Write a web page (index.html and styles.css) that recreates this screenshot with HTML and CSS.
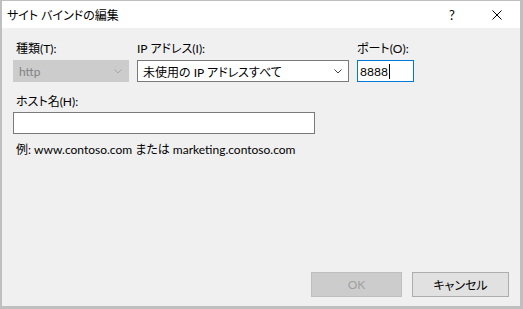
FILE: index.html
```html
<!DOCTYPE html>
<html lang="ja">

<head>
    <meta charset="UTF-8">
    <title>サイト バインドの編集</title>
    <link rel="stylesheet" href="styles.css">
</head>

<body>
    <div class="dialog">
        <div class="titlebar">
            <span class="title">サイト バインドの編集</span>
            <span class="help">?</span>
            <span class="close">
                <svg width="10" height="10" viewBox="0 0 10 10">
                    <path d="M0.5 0.5 L9.5 9.5 M9.5 0.5 L0.5 9.5" stroke="#000" stroke-width="1" fill="none" />
                </svg>
            </span>
        </div>
        <div class="content">
            <div class="row">
                <div class="group g-type">
                    <div class="label indent">種類(T):</div>
                    <div class="select disabled">
                        <span>http</span>
                        <svg width="8" height="5" viewBox="0 0 8 5">
                            <path d="M0.5 0.5 L4 4 L7.5 0.5" stroke="#a6a6a6" fill="none" />
                        </svg>
                    </div>
                </div>
                <div class="group g-ip">
                    <div class="label">IP アドレス(I):</div>
                    <div class="select">
                        <span>未使用の IP アドレスすべて</span>
                        <svg width="8" height="5" viewBox="0 0 8 5">
                            <path d="M0.5 0.5 L4 4 L7.5 0.5" stroke="#444" fill="none" />
                        </svg>
                    </div>
                </div>
                <div class="group g-port">
                    <div class="label">ポート(O):</div>
                    <div class="input focus">8888<i class="caret"></i></div>
                </div>
            </div>
            <div class="label indent host-label">ホスト名(H):</div>
            <div class="input host"></div>
            <div class="hint">例: www.contoso.com または marketing.contoso.com</div>
            <div class="buttons">
                <div class="btn ok">OK</div>
                <div class="btn">キャンセル</div>
            </div>
        </div>
    </div>
</body>

</html>
```

FILE: styles.css
```css
* {
    margin: 0;
    padding: 0;
    box-sizing: border-box;
}

body {
    width: 523px;
    height: 309px;
    background-color: #bfbfbf;
    font-family: "Segoe UI", Lato, "Noto Sans CJK JP", sans-serif;
    font-size: 12px;
    font-feature-settings: "palt";
    color: #000;
    overflow: hidden;
}

.dialog {
    margin: 1px 3px 3px 2px;
    height: 305px;
    display: flex;
    flex-direction: column;
    background-color: #f0f0f0;
}

.titlebar {
    height: 27px;
    background-color: #fff;
    display: flex;
    align-items: center;
    padding-left: 5px;
}

.title {
    flex: 1;
}

.help {
    width: 44px;
    font-size: 13px;
    text-align: center;
}

.close {
    width: 46px;
    display: flex;
    justify-content: center;
}

.content {
    flex: 1;
    display: flex;
    flex-direction: column;
    padding: 13px 11px 9px 11px;
}

.row {
    display: flex;
    gap: 8px;
}

.label {
    line-height: 16px;
    margin-bottom: 3px;
}

.indent {
    padding-left: 3px;
}

.g-type {
    width: 116px;
}

.g-ip {
    width: 212px;
}

.g-port {
    width: 57px;
}

.select {
    height: 22px;
    display: flex;
    align-items: center;
    justify-content: space-between;
    padding: 0 6px 0 5px;
    background-color: #fff;
    border: 1px solid #7a7a7a;
}

.select.disabled {
    background-color: #cccccc;
    border-color: #cccccc;
    color: #838383;
}

.input {
    height: 22px;
    display: flex;
    align-items: center;
    padding-left: 2px;
    background-color: #fff;
    border: 1px solid #7a7a7a;
}

.input.focus {
    border-color: #0078d7;
}

.caret {
    width: 1px;
    height: 15px;
    background-color: #000;
    margin-left: 1px;
}

.host-label {
    margin-top: 12px;
    margin-bottom: 2px;
}

.host {
    width: 302px;
}

.hint {
    margin-top: 8px;
    padding-left: 3px;
    line-height: 16px;
}

.buttons {
    margin-top: auto;
    display: flex;
    justify-content: flex-end;
    gap: 10px;
}

.btn {
    width: 97px;
    height: 25px;
    display: flex;
    align-items: center;
    justify-content: center;
    background-color: #e1e1e1;
    border: 1px solid #adadad;
}

.btn.ok {
    width: 91px;
    background-color: #cccccc;
    border-color: #bfbfbf;
    color: #a0a0a0;
}
```
